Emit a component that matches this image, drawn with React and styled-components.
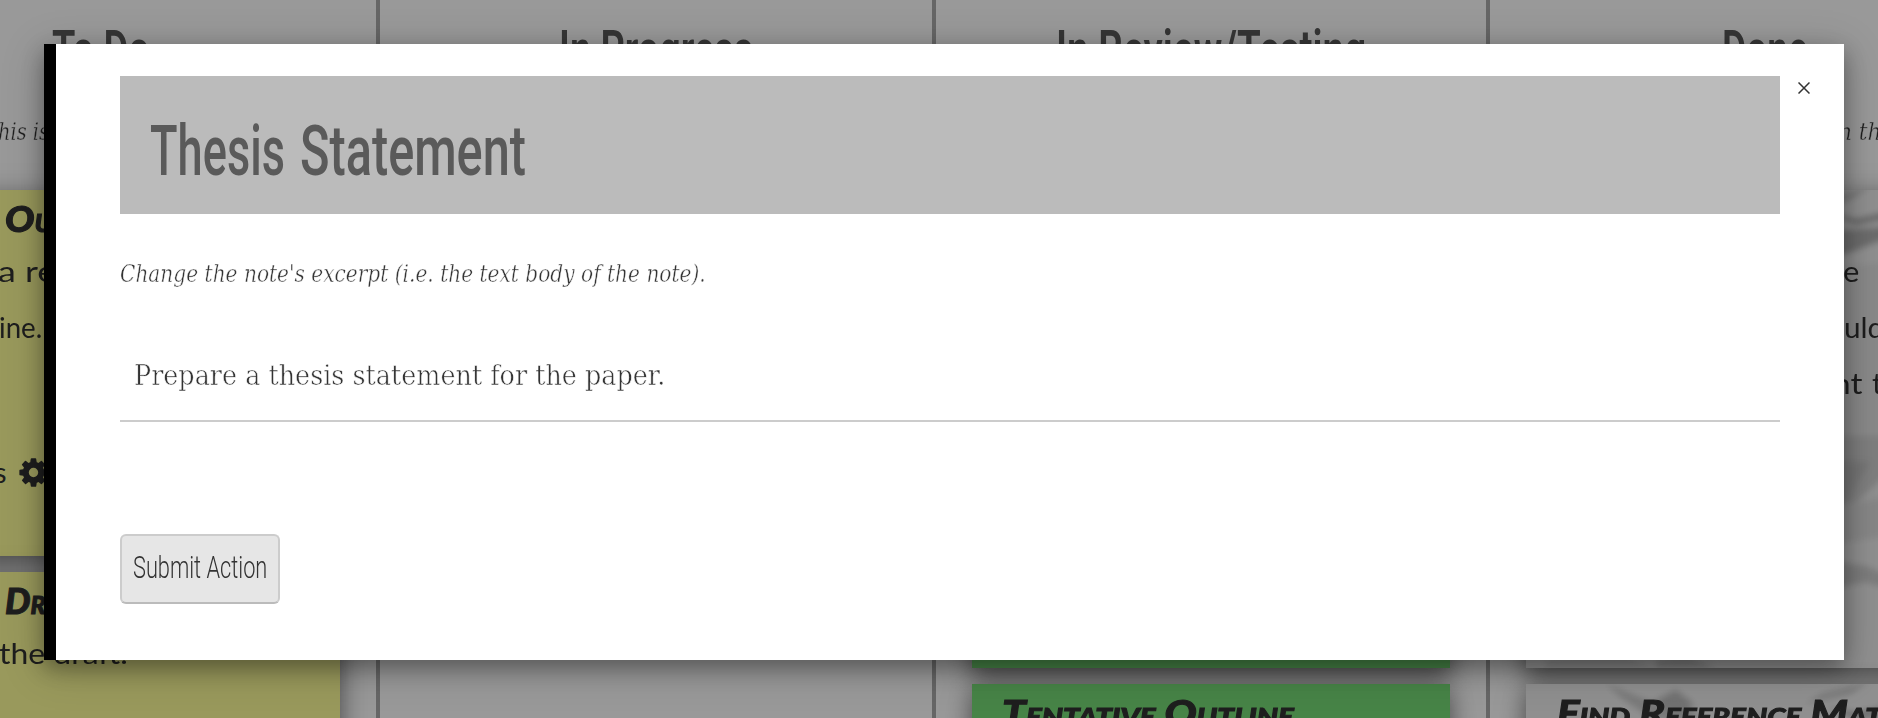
import React, { useLayoutEffect, useRef, useState } from "react";
import styled, { createGlobalStyle } from "styled-components";

const GlobalStyle = createGlobalStyle`
  * { box-sizing: border-box; }
  html, body { margin: 0; height: 718px; overflow: hidden; background: #fff; }
`;

const display = `Roboto, "Liberation Sans", sans-serif`;
const slab = `"DejaVu Serif", "Liberation Serif", serif`;
const hand = `Lato, "Open Sans", sans-serif`;

const Page = styled.div`
  position: relative;
  width: 1878px;
  height: 718px;
  overflow: hidden;
`;

const Board = styled.div`
  display: flex;
  height: 718px;
  margin-left: -178px;
  width: 2222px;
`;

const Column = styled.section`
  flex: 0 0 ${(p) => p.$width}px;
  height: 718px;
  padding: 23px 36px 0;
  border-left: 4px solid #aaa;
`;

const ColumnTitle = styled.h2`
  display: flex;
  justify-content: center;
  margin: 0;
  height: 65px;
  font: 600 54px/54px ${display};
  color: #5a5a5a;
`;

const ColumnHint = styled.div`
  height: 102px;
  padding: 29px 0 0 ${(p) => p.$indent}px;
  font: italic 300 24px/30px ${slab};
  color: #333;
  -webkit-text-stroke: 0.4px #fff;
`;

const noteColors = {
  yellow: "#ffff99",
  green: "#77dd77",
  paper: "#efefef",
};

const Note = styled.article`
  position: relative;
  width: 478px;
  height: ${(p) => p.$height}px;
  margin-bottom: 16px;
  background: ${(p) => noteColors[p.$tone]};
  box-shadow: 0 8px 20px rgba(0, 0, 0, 0.36), 0 8px 32px rgba(0, 0, 0, 0.24);
  color: #333;
`;

const Texture = styled.svg`
  position: absolute;
  inset: 0;
  width: 100%;
  height: 100%;
`;

const NoteTitle = styled.h3`
  position: relative;
  margin: 0;
  height: 53px;
  padding: 8px 0 0 ${(p) => p.$indent}px;
  font: italic 900 36px/40px ${hand};
  font-variant: small-caps;
  -webkit-text-stroke: 1px #333;
`;

const NoteLine = styled.div`
  position: relative;
  display: flex;
  align-items: center;
  gap: 10px;
  height: 56px;
  padding-left: ${(p) => p.$indent}px;
  margin-top: ${(p) => p.$gap || 0}px;
  font: 400 29px/56px ${hand};
`;

const Overlay = styled.div`
  position: absolute;
  inset: 0;
  padding: 44px 34px 0 44px;
  background: rgba(0, 0, 0, 0.4);
`;

const Modal = styled.div`
  display: flex;
  width: 1800px;
  height: 616px;
  padding: 32px 0 0 64px;
  border-left: 12px solid #000;
  background: #fff;
  box-shadow: 0 8px 20px rgba(0, 0, 0, 0.3), 0 8px 40px rgba(0, 0, 0, 0.22);
`;

const Form = styled.div`
  display: flex;
  flex-direction: column;
  align-items: flex-start;
  width: 1660px;
`;

const ModalTitle = styled.h1`
  display: flex;
  gap: 15px;
  width: 100%;
  height: 138px;
  margin: 0;
  padding: 35px 0 0 30px;
  background: #bbb;
  color: #5a5a5a;
  font: 500 70px/80px ${display};
`;

const Prompt = styled.p`
  margin: 44px 0 0;
  font: italic 400 23.5px/32px ${slab};
  color: #333;
  -webkit-text-stroke: 0.45px #fff;
`;

const Field = styled.div`
  width: 100%;
  height: 92px;
  margin-top: 40px;
  padding: 26px 0 0 14px;
  border-bottom: 2px solid #ccc;
  font: 400 28px/40px ${slab};
  color: #333;
  -webkit-text-stroke: 0.6px #fff;
`;

const Submit = styled.button`
  width: 160px;
  height: 70px;
  margin-top: 112px;
  padding: 0 0 4px 11px;
  border: 2px solid #ccc;
  border-bottom-color: #bbb;
  border-radius: 6px;
  background: #e6e6e6;
  color: #333;
  text-align: left;
  font: 350 32px/62px ${display};
`;

const Close = styled.button`
  width: 24px;
  height: 24px;
  margin: 0 0 0 12px;
  padding: 6px;
  border: 0;
  background: none;
`;

const FitBox = styled.span`
  display: inline-block;
  white-space: nowrap;
  transform-origin: 0 50%;
`;

const FitFrame = styled.span`
  display: inline-block;
  width: ${(p) => p.$width}px;
  white-space: nowrap;
`;

// Condenses or widens a line of text so it fills the given width.
function Fit({ width, children }) {
  const ref = useRef(null);
  const [scale, setScale] = useState(1);
  useLayoutEffect(() => {
    setScale(width / ref.current.offsetWidth);
  }, [width, children]);
  return (
    <FitFrame $width={width}>
      <FitBox ref={ref} style={{ transform: `scaleX(${scale})` }}>{children}</FitBox>
    </FitFrame>
  );
}

function Gear() {
  return (
    <svg width="33" height="33" viewBox="0 0 1792 1792" fill="#333">
      <path d="M1152 896q0-106-75-181t-181-75-181 75-75 181 75 181 181 75 181-75 75-181zm512-109v222q0 12-8 23t-20 13l-185 28q-19 54-39 91 35 50 107 138 10 12 10 25t-9 23q-27 37-99 108t-94 71q-12 0-26-9l-138-108q-44 23-91 38-16 136-29 186-7 28-36 28h-222q-14 0-24.5-8.5t-11.5-21.5l-28-184q-49-16-90-37l-141 107q-10 9-25 9-14 0-25-11-126-114-165-168-7-10-7-23 0-12 8-23 15-21 51-66.5t54-70.5q-27-50-41-99l-183-27q-13-2-21-12.5t-8-23.5v-222q0-12 8-23t19-13l186-28q14-46 39-92-40-57-107-138-10-12-10-24 0-10 9-23 26-36 98.5-107.5t94.5-71.5q13 0 26 10l138 107q44-23 91-38 16-136 29-186 7-28 36-28h222q14 0 24.5 8.5t11.5 21.5l28 184q49 16 90 37l142-107q9-9 24-9 13 0 25 10 129 119 165 170 7 8 7 22 0 12-8 23-15 21-51 66.5t-54 70.5q26 50 41 98l183 28q13 2 21 12.5t8 23.5z" />
    </svg>
  );
}

// Creased paper: soft folds, painted over the note's base colour.
function Paper({ id, height }) {
  return (
    <Texture viewBox={`0 0 478 ${height}`} preserveAspectRatio="none">
      <defs>
        <filter id={`${id}-soft`} x="-20%" y="-20%" width="140%" height="140%">
          <feGaussianBlur stdDeviation="3" />
        </filter>
        <clipPath id={`${id}-clip`}><rect width="478" height={height} /></clipPath>
      </defs>
      <g clipPath={`url(#${id}-clip)`}>
        <g filter={`url(#${id}-soft)`}>
          <path d="M80 0L120 16L170 26V40L125 34L96 14Z" fill="#c9c9c9" />
          <path d="M130 16L150 6L168 20L150 34Z" fill="#bdbdbd" />
          <path d="M345 -4L295 10L280 20L325 10Z" fill="#cbcbcb" />
          <path d="M300 22L330 29L372 20V26L330 35Z" fill="#a8a8a8" />
          <path d="M290 42L372 36V44L325 62L290 70Z" fill="#b4b4b4" />
          <path d="M300 80L372 70V245H300Z" fill="#e4e4e4" />
          <path d="M300 246H372V274L330 312L300 318Z" fill="#d2d2d2" />
          <path d="M300 270L345 272L318 314L300 312Z" fill="#c4c4c4" />
          <path d="M300 318L372 305V345L300 355Z" fill="#e0e0e0" />
          <path d="M300 370L340 376L372 390V402L340 392L300 400Z" fill="#cfcfcf" />
          <path d="M20 470L90 464L130 478H20Z" fill="#dadada" />
          <path d="M130 470L160 466L190 478H130Z" fill="#cacaca" />
        </g>
      </g>
    </Texture>
  );
}

export default function App() {
  return (
    <>
      <GlobalStyle />
      <Page>
        <Board>
          <Column $width={554}>
            <ColumnTitle><Fit width={98}>To Do</Fit></ColumnTitle>
            <ColumnHint $indent={123}><Fit width={64}>This is</Fit></ColumnHint>
            <Note $tone="yellow" $height={366}>
              <NoteTitle $indent={143}><Fit width={118}>Outline</Fit></NoteTitle>
              <NoteLine $indent={136}><Fit width={58}>a re</Fit></NoteLine>
              <NoteLine $indent={137}><Fit width={43}>ine.</Fit></NoteLine>
              <NoteLine $indent={132} $gap={89}><Fit width={13}>s</Fit><Gear /></NoteLine>
            </Note>
            <Note $tone="yellow" $height={366}>
              <NoteTitle $indent={143}><Fit width={84}>Draft</Fit></NoteTitle>
              <NoteLine $indent={137}><Fit width={129}>the draft.</Fit></NoteLine>
            </Note>
          </Column>
          <Column $width={556}>
            <ColumnTitle><Fit width={194}>In Progress</Fit></ColumnTitle>
          </Column>
          <Column $width={554}>
            <ColumnTitle><Fit width={310}>In Review/Testing</Fit></ColumnTitle>
            <ColumnHint />
            <Note $tone="green" $height={478} />
            <Note $tone="green" $height={366}>
              <NoteTitle $indent={30}><Fit width={292}>Tentative Outline</Fit></NoteTitle>
            </Note>
          </Column>
          <Column $width={554}>
            <ColumnTitle><Fit width={86}>Done</Fit></ColumnTitle>
            <ColumnHint $indent={312}><Fit width={56}>n the</Fit></ColumnHint>
            <Note $tone="paper" $height={478}>
              <Paper id="note-a" height={478} />
              <NoteTitle $indent={32} />
              <NoteLine $indent={317}><Fit width={16}>e</Fit></NoteLine>
              <NoteLine $indent={318}><Fit width={40}>uld</Fit></NoteLine>
              <NoteLine $indent={306}><Fit width={30}>nt</Fit><Fit width={28}>to</Fit></NoteLine>
            </Note>
            <Note $tone="paper" $height={478}>
              <Paper id="note-b" height={478} />
              <NoteTitle $indent={31}><Fit width={401}>Find Reference Material</Fit></NoteTitle>
            </Note>
          </Column>
        </Board>
        <Overlay>
          <Modal>
            <Form>
              <ModalTitle>
                <Fit width={135}>Thesis</Fit>
                <Fit width={226}>Statement</Fit>
              </ModalTitle>
              <Prompt><Fit width={586}>Change the note's excerpt (i.e. the text body of the note).</Fit></Prompt>
              <Field><Fit width={531}>Prepare a thesis statement for the paper.</Fit></Field>
              <Submit><Fit width={134}>Submit Action</Fit></Submit>
            </Form>
            <Close aria-label="Close">
              <svg width="12" height="12" viewBox="0 0 12 12" fill="none" stroke="#333" strokeWidth="1.5">
                <path d="M0.5 0.5L11.5 11.5M11.5 0.5L0.5 11.5" />
              </svg>
            </Close>
          </Modal>
        </Overlay>
      </Page>
    </>
  );
}
